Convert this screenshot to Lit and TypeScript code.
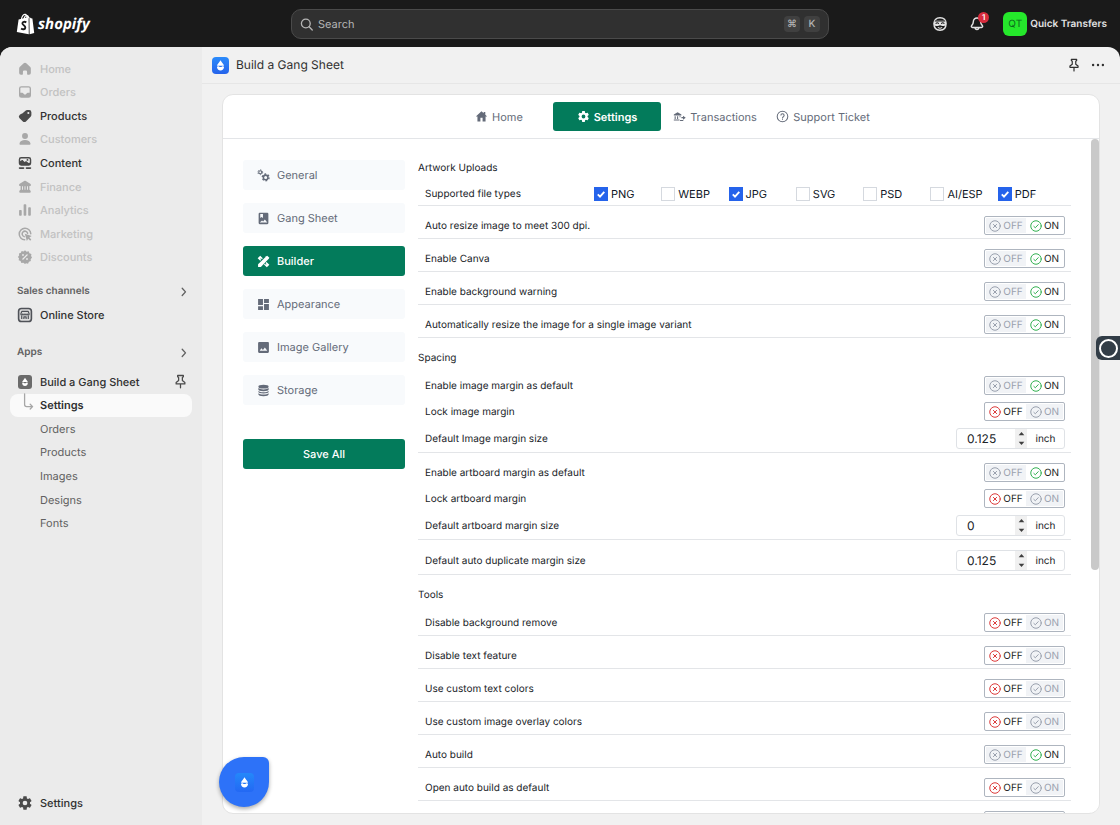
import { LitElement, html, css, svg, nothing } from "lit";
import { customElement, property, state } from "lit/decorators.js";
import { classMap } from "lit/directives/class-map.js";

const COG =
  "M12,15.5A3.5,3.5 0 0,1 8.5,12A3.5,3.5 0 0,1 12,8.5A3.5,3.5 0 0,1 15.5,12A3.5,3.5 0 0,1 12,15.5M19.43,12.97C19.47,12.65 19.5,12.33 19.5,12C19.5,11.67 19.47,11.34 19.43,11L21.54,9.37C21.73,9.22 21.78,8.95 21.66,8.73L19.66,5.27C19.54,5.05 19.27,4.96 19.05,5.05L16.56,6.05C16.04,5.66 15.5,5.32 14.87,5.07L14.5,2.42C14.46,2.18 14.25,2 14,2H10C9.75,2 9.54,2.18 9.5,2.42L9.13,5.07C8.5,5.32 7.96,5.66 7.44,6.05L4.95,5.05C4.73,4.96 4.46,5.05 4.34,5.27L2.34,8.73C2.21,8.95 2.27,9.22 2.46,9.37L4.57,11C4.53,11.34 4.5,11.67 4.5,12C4.5,12.33 4.53,12.65 4.57,12.97L2.46,14.63C2.27,14.78 2.21,15.05 2.34,15.27L4.34,18.73C4.46,18.95 4.73,19.03 4.95,18.95L7.44,17.94C7.96,18.34 8.5,18.68 9.13,18.93L9.5,21.58C9.54,21.82 9.75,22 10,22H14C14.25,22 14.46,21.82 14.5,21.58L14.87,18.93C15.5,18.67 16.04,18.34 16.56,17.94L19.05,18.95C19.27,19.03 19.54,18.95 19.66,18.73L21.66,15.27C21.78,15.05 21.73,14.78 21.54,14.63L19.43,12.97Z";

const DROP = svg`
  <path d="M12 3.5C13.2 6 17 9.6 17.6 12.2H6.4C7 9.6 10.8 6 12 3.5Z"/>
  <path d="M6.3 14c1.3-1.1 2.4-1.1 3.6-.2 1.3 1 2.900 1 4.200 0 1.200-.9 2.400-.9 3.600.2-.1 3.600-2.500 6-5.700 6s-5.600-2.400-5.700-6z"/>`;

/* Solid glyphs are filled with currentColor; outlined ones set their own stroke. */
const ICONS: Record<string, { box: number; body: unknown }> = {
  navHome: { box: 20, body: svg`<path d="M8.4 2.9a2.300 2.300 0 0 1 3.200 0l4.700 4.400c.6.6 1 1.400 1 2.200V15a2.200 2.200 0 0 1-2.200 2.200h-1.600a.9.9 0 0 1-.9-.9v-3a1.400 1.400 0 0 0-1.400-1.400H8.800a1.400 1.400 0 0 0-1.400 1.400v3a.9.9 0 0 1-.9.9H4.900A2.200 2.200 0 0 1 2.700 15V9.500c0-.8.4-1.600 1-2.200z"/>` },
  navOrders: { box: 20, body: svg`<path fill-rule="evenodd" d="M5.500 2.700h9a3 3 0 0 1 3 3v8.600a3 3 0 0 1-3 3h-9a3 3 0 0 1-3-3V5.700a3 3 0 0 1 3-3zm0 1.700c-.8 0-1.300.5-1.300 1.300v5.100h2.300c.7 0 1.300.4 1.600 1l.3.6c.2.4.5.6.9.6h1.400c.4 0 .7-.2.9-.6l.3-.6c.3-.6.900-1 1.600-1h2.300V5.700c0-.8-.5-1.300-1.300-1.300z"/>` },
  navProducts: { box: 20, body: svg`<path fill-rule="evenodd" d="M10.600 3.300A3 3 0 0 1 12.700 2.500h2.600a2.800 2.800 0 0 1 2.700 2.700v2.600c0 1.700-.3 2.500-1 3.200l-5.500 5.500a3.200 3.200 0 0 1-4.500 0L3.200 12.700a3 3 0 0 1 0-4.100c1-1 2.200-1.400 3.400-1.700zM14.200 7.500a1.300 1.300 0 1 0 0-2.600 1.300 1.300 0 0 0 0 2.600z"/>` },
  navCustomers: { box: 20, body: svg`<circle cx="10" cy="6.200" r="3.700"/><path d="M10 11.400c-3.600 0-6.700 1.700-6.900 4.400-.1.900.6 1.500 1.400 1.500h11c.8 0 1.500-.6 1.400-1.500-.2-2.700-3.300-4.400-6.900-4.400z"/>` },
  navContent: { box: 20, body: svg`<path fill-rule="evenodd" d="M5.200 2.500h9.600a3 3 0 0 1 3 3v4.900a3 3 0 0 1-3 3H5.200a3 3 0 0 1-3-3V5.500a3 3 0 0 1 3-3zm0 1.800c-.8 0-1.200.4-1.200 1.200v2.300l1.800-1.200c.6-.4 1.300-.3 1.800.2l1.800 1.800 1-.6c.6-.4 1.300-.3 1.800.1l1.900 1.500c1 .7 1.900.5 1.900-.4V5.500c0-.8-.4-1.200-1.200-1.200zM13.100 7.300a1.200 1.200 0 1 0 0-2.400 1.200 1.200 0 0 0 0 2.400z"/><rect x="2.200" y="15.200" width="7" height="2.200" rx="1"/><rect x="10.800" y="15.200" width="7" height="2.200" rx="1"/>` },
  navFinance: { box: 20, body: svg`<path fill-rule="evenodd" d="M9 2.600c.6-.4 1.400-.4 2 0l5.600 3.200c1.500.9.900 3-.8 3h-.3v4.700c.9.300 1.700 1.100 1.700 2.300 0 .9-.7 1.500-1.500 1.500H4.300c-.8 0-1.500-.6-1.500-1.500 0-1.200.8-2 1.700-2.300V8.800h-.3c-1.700 0-2.300-2.100-.8-3zM6.300 9v4.300h1.200V9zm3.100 0v4.300h1.200V9zm3.100 0v4.300h1.200V9z"/>` },
  navAnalytics: { box: 20, body: svg`<rect x="2.600" y="10" width="3.300" height="7.200" rx="1"/><rect x="8.300" y="2.800" width="3.300" height="14.400" rx="1"/><rect x="14" y="6.500" width="3.300" height="10.700" rx="1"/>` },
  navMarketing: { box: 20, body: svg`<g fill="none" stroke="currentColor" stroke-width="1.900" stroke-linecap="round"><path d="M17.200 9.600A7.200 7.200 0 1 0 9.600 17.200"/><path d="M13.300 9A3.500 3.500 0 1 0 9 13.300"/></g><path d="M9.800 9.800l8.600 2.800-3 1.800 2.500 2.600-1.400 1.400-2.500-2.500-1.700 2.700z"/>` },
  navDiscounts: { box: 20, body: svg`<path fill-rule="evenodd" d="M10 1.600l2 1.700 2.600-.4.900 2.500 2.500.9-.4 2.600 1.200 1.800-1.700 2 .2 2.400-2.400.8-1.100 2.400-2.500-.5L10 18.800l-2-1.500-2.600.1-.9-2.400-2.400-.9.4-2.500L1.100 10l1.600-2-.3-2.500 2.500-.9L5.800 2.500l2.400.6zM7.500 8.600a1.100 1.100 0 1 0 0-2.200 1.100 1.100 0 0 0 0 2.200zm5 5a1.100 1.100 0 1 0 0-2.200 1.100 1.100 0 0 0 0 2.200zM12.600 6.400L6.400 12.600l1 1 6.200-6.200z"/>` },
  store: { box: 20, body: svg`<rect x="2" y="1.800" width="16" height="16.400" rx="3.600" fill="#dcdcdc" stroke="#4f5258" stroke-width="2"/><g fill="none" stroke="#4f5258" stroke-width="1.500" stroke-linejoin="round"><path d="M6 5.500h8l1.200 3.200c0 1.600-2.400 1.600-2.600 0-.2 1.600-2.400 1.600-2.600 0-.2 1.600-2.400 1.600-2.600 0-.2 1.600-2.600 1.600-2.600 0z"/><path d="M5.900 10.500V15M14.100 10.500V15M8.600 15v-2.600h2.800V15"/></g>` },
  pin: { box: 20, body: svg`<path fill="none" stroke="currentColor" stroke-width="1.700" stroke-linejoin="round" stroke-linecap="round" d="M6.200 2h7.600v1.600l-1.300 1V8.800l3.300 2.500v2H4.200v-2l3.300-2.500V4.600l-1.300-1zM10 13.400v5"/>` },
  chevron: { box: 20, body: svg`<path fill="none" stroke="currentColor" stroke-width="2.200" stroke-linecap="round" stroke-linejoin="round" d="M7 5.500l5.500 6L7 17.500"/>` },
  branch: { box: 20, body: svg`<path fill="none" stroke="#a6a6a6" stroke-width="1.600" stroke-linecap="round" stroke-linejoin="round" d="M9.500-4v13.500a2.500 2.500 0 0 0 2.500 2.500H19.500M16.500 9L19.500 12 16.500 15"/>` },
  search: { box: 20, body: svg`<g fill="none" stroke="currentColor" stroke-width="1.900" stroke-linecap="round"><circle cx="8.300" cy="9.300" r="6.300"/><path d="M13 14l4.500 4.500"/></g>` },
  sidekick: { box: 20, body: svg`<path fill="none" stroke="currentColor" stroke-width="1.800" d="M10 2.300c5.200 0 7.500 2.700 7.500 7.700s-2.300 7.700-7.500 7.700S2.500 15 2.500 10 4.800 2.300 10 2.300z"/><path d="M2.800 5.600h14.400l.8 4c-.7 1.600-2.200 3-4 3-1.700 0-2.700-1-4-1s-2.300 1-4 1c-1.800 0-3.300-1.400-4-3z"/><path fill="none" stroke="#1a1a1a" stroke-width="1.300" stroke-linecap="round" d="M5 9.300c.9-.9 2.200-.9 3.100 0M11.900 9.300c.9-.9 2.200-.9 3.100 0M4 6.300h12"/><path fill="none" stroke="currentColor" stroke-width="1.300" stroke-linecap="round" d="M7.800 14.500c1.400.9 3 .9 4.400 0"/>` },
  bell: { box: 20, body: svg`<path fill="none" stroke="currentColor" stroke-width="1.800" stroke-linejoin="round" stroke-linecap="round" d="M10 2.500a4.600 4.600 0 0 0-4.600 4.600c0 2.500-.8 3.600-2 4.900-.9 1-.4 2.300.9 2.300h11.400c1.300 0 1.800-1.300.9-2.300-1.200-1.300-2-2.400-2-4.900A4.600 4.600 0 0 0 10 2.500zM7.600 14.500a2.400 2.400 0 0 0 4.800 0"/>` },
  dots: { box: 20, body: svg`<circle cx="3" cy="10" r="1.700"/><circle cx="10" cy="10" r="1.700"/><circle cx="17" cy="10" r="1.700"/>` },
  home: { box: 24, body: svg`<path d="M10,21V14.500H14V21H19.500V12H22.500L19 8.800V3.500H16V6.100L12,2.500L1.500,12H4.500V21H10Z"/>` },
  cog: { box: 24, body: svg`<path d="${COG}"/>` },
  transactions: { box: 24, body: svg`<path d="M1.500 8.500L8.500 4l7 4.500v1.700h-14z"/><path d="M3 11.500h2v5H3zM7.500 11.500h2v5h-2zM12 11.500h2v2h-2zM1.500 17.500H12v2H1.500z"/><path d="M15.500 13h3v-2.500l5 3.700-5 3.700v-2.500h-3zM13 18.500h6v1.800h-6z"/>` },
  help: { box: 24, body: svg`<circle cx="12" cy="12" r="9.800" fill="none" stroke="currentColor" stroke-width="1.900"/><path d="M11,18H13V16H11V18M12,6A4,4 0 0,0 8,10H10A2,2 0 0,1 12,8A2,2 0 0,1 14,10C14,12 11,11.750 11,15H13C13,12.750 16,12.500 16,10A4,4 0 0,0 12,6Z"/>` },
  gears: { box: 24, body: svg`<g fill="none" stroke="currentColor"><circle cx="6" cy="6" r="2.800" stroke-width="2"/><circle cx="6" cy="6" r="4.400" stroke-width="1.800" stroke-dasharray="2.300 2.300"/><circle cx="16" cy="15.500" r="4.200" stroke-width="2.800"/><circle cx="16" cy="15.500" r="6.200" stroke-width="2.600" stroke-dasharray="3.250 3.250"/></g>` },
  album: { box: 24, body: svg`<path fill-rule="evenodd" d="M5 1.500h14a2 2 0 0 1 2 2v17a2 2 0 0 1-2 2H5a2 2 0 0 1-2-2v-17a2 2 0 0 1 2-2zm1 2v7.500l2.500-1.700L11 11V3.500zm-1 16h14l-4.500-5.500-3.200 3.600-2-2z"/>` },
  tools: { box: 24, body: svg`<path d="M17.200 2.300l1.700-1.100 3.900 3.900-1.100 1.800L7.100 22H2v-5z"/><path d="M1.200 6l4.700-4.700 4.800 4.800-1.800 1.800-1.700-1.700-1 1 1.700 1.700-1.900 1.900zM17.500 12.800l5.300 5.300-4.700 4.700-5.200-5.200 1.700-1.700 1.900 1.900 1-1-1.900-1.900z"/>` },
  dashboard: { box: 24, body: svg`<path d="M13,2V9H22V2M13,22H22V11H13M2,22H11V15H2M2,13H11V2H2V13Z"/>` },
  image: { box: 24, body: svg`<path d="M8,13.500L11,16.500L14.500,12L19,18H5M22,20V4C22,2.900 21.100,2 20,2H4A2,2 0 0,0 2,4V20A2,2 0 0,0 4,22H20A2,2 0 0,0 22,20Z" fill-rule="evenodd"/>` },
  storage: { box: 24, body: svg`<ellipse cx="12" cy="5" rx="9.500" ry="3.500"/><path d="M2.500 7.500c1.600 1.700 5.500 2.500 9.500 2.500s7.900-.8 9.500-2.500v2.500c0 1.700-3.700 3.200-9.500 3.200s-9.500-1.500-9.500-3.200zM2.500 12.700c1.600 1.500 5.500 2.300 9.500 2.300s7.900-.8 9.500-2.300v1.600c0 1.700-3.700 3.200-9.500 3.200s-9.500-1.500-9.500-3.200zM2.500 17c1.600 1.500 5.500 2.300 9.500 2.300s7.900-.8 9.500-2.300v1.800c0 2-3.700 3.700-9.500 3.700s-9.500-1.700-9.500-3.700z"/>` },
  off: { box: 24, body: svg`<g fill="none" stroke="currentColor" stroke-width="2" stroke-linecap="round"><circle cx="12" cy="12" r="10.500"/><path d="M8.700 8.700l6.600 6.600M15.300 8.700l-6.600 6.600"/></g>` },
  on: { box: 24, body: svg`<g fill="none" stroke="currentColor" stroke-width="2" stroke-linecap="round" stroke-linejoin="round"><circle cx="12" cy="12" r="10.500"/><path d="M7.700 12.800l2.900 2.700 5.900-6.200"/></g>` },
  up: { box: 10, body: svg`<path d="M1 7.500L5 3l4 4.500z"/>` },
  down: { box: 10, body: svg`<path d="M1 2.500L5 7l4-4.500z"/>` },
  drop: { box: 24, body: DROP },
};

const icon = (name: string, size = 16) => {
  const glyph = ICONS[name];
  return html`<svg width=${size} height=${size} viewBox="0 0 ${glyph.box} ${glyph.box}" fill="currentColor" aria-hidden="true">${glyph.body}</svg>`;
};

const base = css`
  * { box-sizing: border-box; }
  svg { display: block; flex: none; overflow: visible; }
  a { color: inherit; text-decoration: none; }
  button, input { font: inherit; color: inherit; text-rendering: inherit; }
  button { margin: 0; padding: 0; border: 0; background: none; cursor: pointer; }
`;

@customElement("on-off-toggle")
export class OnOffToggle extends LitElement {
  @property({ type: Boolean }) on = false;
  @property({ type: Boolean }) bare = false;
  @property() name = "";

  static styles = [
    base,
    css`
      :host { display: block; }
      .toggle { display: flex; padding: 1px; border: 1px solid #aeb5bf; border-radius: 2px; background: #fff; height: 19px; }
      .half { display: flex; align-items: center; justify-content: center; gap: 2px; height: 15px; color: #9aa1ae; background: #f1f3f6; }
      .left { width: 40px; }
      .right { width: 37px; }
      .active { color: #1c1f24; background: #fff; }
      .left.active svg { color: #dc3b3b; }
      .right.active svg { color: #34b153; }
    `,
  ];

  render() {
    return html`
      <button class="toggle" role="switch" aria-label=${this.name || nothing} aria-checked=${this.on ? "true" : "false"} @click=${() => (this.on = !this.on)}>
        <span class=${classMap({ half: true, left: true, active: !this.on })}>${this.bare ? nothing : html`${icon("off", 12)}OFF`}</span>
        <span class=${classMap({ half: true, right: true, active: this.on })}>${this.bare ? nothing : html`${icon("on", 12)}ON`}</span>
      </button>`;
  }
}

@customElement("inch-field")
export class InchField extends LitElement {
  @property() value = "0";
  @property() name = "";

  static styles = [
    base,
    css`
      :host { display: block; }
      .field { display: flex; align-items: stretch; width: 109px; height: 21px; border: 1px solid #dfe2e6; border-radius: 3px; background: #fff; }
      .value { flex: 1; min-width: 0; padding: 0 0 0 10px; border: 0; outline: 0; background: none; font-size: 12px; }
      .spin { display: flex; flex-direction: column; justify-content: space-between; align-items: center; width: 12px; padding: 1px 0; background: #f0f0f0; color: #3f3f3f; }
      .unit { display: flex; align-items: center; justify-content: center; width: 37px; }
    `,
  ];

  private step(by: number) {
    this.value = String(Math.max(0, Number(this.value) + by));
  }

  render() {
    return html`
      <div class="field">
        <input class="value" inputmode="decimal" aria-label=${this.name} .value=${this.value} />
        <span class="spin">
          <button aria-label="+" @click=${() => this.step(0.125)}>${icon("up", 7)}</button>
          <button aria-label="-" @click=${() => this.step(-0.125)}>${icon("down", 7)}</button>
        </span>
        <span class="unit">inch</span>
      </div>`;
  }
}

type Row = { label: string; on?: boolean; size?: string };
const FILE_TYPES: [string, boolean][] = [
  ["PNG", true], ["WEBP", false], ["JPG", true], ["SVG", false], ["PSD", false], ["AI/ESP", false], ["PDF", true],
];
const UPLOADS: Row[][] = [
  [{ label: "Auto resize image to meet 300 dpi.", on: true }],
  [{ label: "Enable Canva", on: true }],
  [{ label: "Enable background warning", on: true }],
  [{ label: "Automatically resize the image for a single image variant", on: true }],
];
const SPACING: Row[][] = [
  [
    { label: "Enable image margin as default", on: true },
    { label: "Lock image margin", on: false },
    { label: "Default Image margin size", size: "0.125" },
  ],
  [
    { label: "Enable artboard margin as default", on: true },
    { label: "Lock artboard margin", on: false },
    { label: "Default artboard margin size", size: "0" },
  ],
  [{ label: "Default auto duplicate margin size", size: "0.125" }],
];
const TOOLS: Row[][] = [
  [{ label: "Disable background remove", on: false }],
  [{ label: "Disable text feature", on: false }],
  [{ label: "Use custom text colors", on: false }],
  [{ label: "Use custom image overlay colors", on: false }],
  [{ label: "Auto build", on: true }],
  [{ label: "Open auto build as default", on: false }],
  [{ label: "", on: false }],
];

@customElement("builder-settings")
export class BuilderSettings extends LitElement {
  static styles = [
    base,
    css`
      :host { display: block; font-size: 10px; color: #202328; }
      .heading { margin: 12px 0 0; font-size: 10px; line-height: 16px; font-weight: 400; }
      .types { display: flex; align-items: center; margin-top: 6px; padding: 0 6px 0 7px; height: 24px; border-bottom: 1px solid #e3e5e8; }
      .types-label { width: 169px; }
      .types-list { flex: 1; display: grid; grid-template-columns: repeat(7, 1fr); font-size: 11px; }
      .type { display: flex; align-items: center; gap: 3px; color: #111827; white-space: nowrap; }
      .check { appearance: none; margin: 0; width: 14px; height: 14px; flex: none; border: 1px solid #d5d9df; background: #fff; }
      .check:checked { border-color: #2563eb; background: #2563eb url("data:image/svg+xml,%3Csvg xmlns='http://www.w3.org/2000/svg' viewBox='0 0 14 14'%3E%3Cpath d='M3.800 7.400l2.200 2.200 4.300-4.700' fill='none' stroke='white' stroke-width='1.900'/%3E%3C/svg%3E") center / 14px 14px; }
      .group { display: flex; flex-direction: column; gap: 7px; padding: 10px 6px 3px 7px; border-bottom: 1px solid #e3e5e8; }
      .row { display: flex; align-items: center; justify-content: space-between; }
    `,
  ];

  private groups(list: Row[][]) {
    return list.map(
      (group) => html`
        <div class="group">
          ${group.map(
            (row) => html`
              <div class="row">
                <span>${row.label}</span>
                ${row.size !== undefined
                  ? html`<inch-field .value=${row.size} .name=${row.label}></inch-field>`
                  : html`<on-off-toggle .on=${!!row.on} .bare=${!row.label} .name=${row.label}></on-off-toggle>`}
              </div>`,
          )}
        </div>`,
    );
  }

  render() {
    return html`
      <h2 class="heading">Artwork Uploads</h2>
      <div class="types">
        <span class="types-label">Supported file types</span>
        <div class="types-list">
          ${FILE_TYPES.map(([name, on]) => html`<label class="type"><input class="check" type="checkbox" .checked=${on} />${name}</label>`)}
        </div>
      </div>
      ${this.groups(UPLOADS)}
      <h2 class="heading">Spacing</h2>
      ${this.groups(SPACING)}
      <h2 class="heading">Tools</h2>
      ${this.groups(TOOLS)}`;
  }
}

@customElement("admin-sidebar")
export class AdminSidebar extends LitElement {
  static styles = [
    base,
    css`
      :host { display: flex; flex-direction: column; background: #ebebeb; padding: 10px 10px 11px; font-weight: 500; color: #303030; }
      .list { display: grid; grid-auto-rows: 1fr; }
      .main { min-height: 212px; }
      .apps { min-height: 165px; margin-top: 6px; }
      .item { display: flex; align-items: center; gap: 7px; padding: 0 4px 0 7px; }
      .item svg { color: #4a4a4a; }
      .off { color: #c2c2c2; }
      .off svg { color: #a8a8a8; }
      .sub { padding-left: 30px; font-weight: 400; color: #616161; }
      .here { padding-left: 7px; background: #fafafa; border-radius: 8px; font-weight: 600; }
      .name { flex: 1; }
      .title { display: flex; justify-content: space-between; align-items: center; margin-top: 10px; padding: 0 2px 0 7px; height: 24px; font-size: 10px; font-weight: 600; color: #616161; }
      .title.late { margin-top: 14px; }
      .tall { height: 23px; }
      .logo { display: grid; place-items: center; width: 14px; height: 14px; margin: 0 1px; border-radius: 3px; background: #6b6b6b; }
      .item .logo svg { color: #fff; }
      .foot { margin-top: auto; }
    `,
  ];

  render() {
    const main: [string, string, boolean][] = [
      ["Home", "navHome", false], ["Orders", "navOrders", false], ["Products", "navProducts", true],
      ["Customers", "navCustomers", false], ["Content", "navContent", true], ["Finance", "navFinance", false],
      ["Analytics", "navAnalytics", false], ["Marketing", "navMarketing", false], ["Discounts", "navDiscounts", false],
    ];
    return html`
      <nav class="list main">
        ${main.map(([label, glyph, on]) => html`<a class=${classMap({ item: true, off: !on })} href="#">${icon(glyph)}${label}</a>`)}
      </nav>
      <a class="title" href="#">Sales channels ${icon("chevron", 12)}</a>
      <a class="item tall" href="#">${icon("store")}Online Store</a>
      <a class="title late" href="#">Apps ${icon("chevron", 12)}</a>
      <nav class="list apps">
        <a class="item" href="#"><span class="logo">${icon("drop", 12)}</span><span class="name">Build a Gang Sheet</span>${icon("pin", 15)}</a>
        <a class="item here" href="#">${icon("branch")}Settings</a>
        ${["Orders", "Products", "Images", "Designs", "Fonts"].map((label) => html`<a class="item sub" href="#">${label}</a>`)}
      </nav>
      <a class="item tall foot" href="#">${icon("cog", 16)}Settings</a>`;
  }
}

@customElement("app-root")
export class AppRoot extends LitElement {
  @state() private section = "Builder";
  @state() private tab = "Settings";

  static styles = [
    base,
    css`
      :host { display: flex; flex-direction: column; height: 100vh; position: relative; overflow: hidden; background: #1a1a1a; color: #303030; font: 400 11px/16px Inter, "Liberation Sans", sans-serif; text-rendering: geometricPrecision; }
      .top { display: grid; grid-template-columns: 1fr minmax(0, 538px) 1fr; align-items: center; height: 47px; padding: 0 13px; color: #e3e3e3; flex: none; }
      .brand { display: flex; align-items: center; gap: 3px; padding-left: 3px; color: #fff; font: italic 700 15px/20px "Open Sans", "Noto Sans", sans-serif; }
      .search { display: flex; align-items: center; gap: 4px; height: 30px; padding: 0 8px; border: 1px solid #4a4a4a; border-radius: 10px; background: #303030; color: #b5b5b5; }
      .query { flex: 1; min-width: 0; border: 0; outline: 0; background: none; font-size: 11px; padding: 0; }
      .query::placeholder { color: #b5b5b5; opacity: 1; }
      .key { display: grid; place-items: center; width: 16px; height: 16px; border-radius: 4px; background: #404040; font: 500 10px/16px Inter, "DejaVu Sans", sans-serif; }
      .account { display: flex; justify-content: flex-end; align-items: center; }
      .bell { position: relative; margin: 0 18px 0 21px; }
      .badge { position: absolute; top: -4px; right: -4px; width: 11px; height: 11px; border-radius: 6px; background: #d72c3d; color: #fff; font-size: 8px; line-height: 11px; font-weight: 600; text-align: center; }
      .user { display: flex; align-items: center; gap: 3px; font-size: 10px; font-weight: 600; }
      .avatar { display: grid; place-items: center; width: 24px; height: 24px; border-radius: 6px; background: #25e82b; color: #0b6a1c; font-weight: 400; }
      .frame { flex: 1; min-height: 0; display: grid; grid-template-columns: 202px minmax(0, 1fr); border-radius: 12px 12px 0 0; overflow: hidden; background: #f1f1f1; }
      .page { display: flex; flex-direction: column; min-height: 0; min-width: 0; }
      .bar { display: flex; align-items: center; height: 37px; flex: none; padding: 0 15px 0 10px; border-bottom: 1px solid #e6e6e6; }
      .app { display: grid; place-items: center; width: 17px; height: 17px; margin-right: 7px; border-radius: 4px; background: linear-gradient(#2b8bfb, #2563eb); color: #fff; }
      .app-name { flex: 1; margin: 0; font-size: 12px; font-weight: 400; }
      .bar button + button { margin-left: 10px; }
      .card { flex: 1; min-height: 0; display: flex; flex-direction: column; margin: 10px 20px 11px 20px; border: 1px solid #e3e3e3; border-radius: 11px; background: #fff; overflow: hidden; }
      .tabs { display: flex; justify-content: center; flex: none; padding: 7px 0; height: 44px; border-bottom: 1px solid #e3e5e8; }
      .tab, .side-link { display: flex; align-items: center; border-radius: 3px; color: #646b79; }
      .tab { justify-content: center; gap: 4px; width: 108px; white-space: nowrap; }
      .green { background: #037b5b; color: #fff; font-weight: 500; }
      .tab.green { background: #037b5b; color: #fff; font-weight: 600; }
      .content { flex: 1; min-height: 0; display: flex; }
      .columns { flex: 1; min-width: 0; display: flex; gap: 13px; padding: 9px 20px 0; overflow: hidden; }
      .side { display: flex; flex-direction: column; gap: 13px; width: 162px; flex: none; padding-top: 12px; }
      .side-link { gap: 7px; height: 30px; padding: 0 14px; background: #f8fafc; }
      .side-link.green { background: #037b5b; color: #fff; }
      .save { height: 30px; margin-top: 21px; border-radius: 3px; }
      .settings { flex: 1; min-width: 0; }
      .track { width: 8px; flex: none; background: #fff; }
      .thumb { height: 64%; border-radius: 4px; background: #c9c9c9; }
      .widget { position: absolute; right: 0; top: 336px; display: grid; place-items: center; width: 24px; height: 24px; border-radius: 6px 0 0 6px; background: #323d47; }
      .ring { width: 19px; height: 19px; border: 2px solid #fff; border-radius: 10px; }
      .chat { position: absolute; left: 219px; bottom: 18px; display: grid; place-items: center; width: 50px; height: 50px; border-radius: 25px 6px 25px 25px; background: #2d72f8; box-shadow: 0 2px 4px #0005; }
      .chat-logo { display: grid; place-items: center; width: 19px; height: 19px; border-radius: 4px; background: linear-gradient(#2488fa, #2368f4); color: #fff; }
    `,
  ];

  render() {
    const tabs = [["Home", "home"], ["Settings", "cog"], ["Transactions", "transactions"], ["Support Ticket", "help"]];
    const sections = [
      ["General", "gears"], ["Gang Sheet", "album"], ["Builder", "tools"],
      ["Appearance", "dashboard"], ["Image Gallery", "image"], ["Storage", "storage"],
    ];
    return html`
      <header class="top">
        <a class="brand" href="#">
          <svg width="19" height="22" viewBox="0 0 19 22" aria-hidden="true">
            <path fill="none" stroke="#fff" stroke-width="1.200" d="M5.400 6.500C5.900 3 7.900 1 9.400 1.400c1.400.4 1.700 2.400 1.700 4.400M8 6C8.500 3.400 10 2.200 11.300 2.600c.9.300 1.300 1.500 1.400 2.600"/>
            <path fill="#fff" d="M2.600 6.600l10-2.700.2 17.300L.8 19z"/>
            <path fill="#fff" d="M13.400 4l1.600 1.300 1.400.2L18.200 20l-4.600 1.200z"/>
            <path fill="none" stroke="#1a1a1a" stroke-width="1.900" d="M10.300 9.300c-1.600-.9-3.800-.6-3.900 1.100-.1 1.800 3 2 2.900 4.200-.1 1.900-2.400 2.200-4.200.9"/>
          </svg>
          <span>shopify</span>
        </a>
        <label class="search">
          ${icon("search", 14)}
          <input class="query" placeholder="Search" aria-label="Search" />
          <kbd class="key">⌘</kbd><kbd class="key">K</kbd>
        </label>
        <div class="account">
          <button>${icon("sidekick")}</button>
          <button class="bell">${icon("bell")}<span class="badge">1</span></button>
          <button class="user"><span class="avatar">QT</span>Quick Transfers</button>
        </div>
      </header>
      <div class="frame">
        <admin-sidebar></admin-sidebar>
        <main class="page">
          <div class="bar">
            <span class="app">${icon("drop", 15)}</span>
            <h1 class="app-name">Build a Gang Sheet</h1>
            <button>${icon("pin", 14)}</button>
            <button>${icon("dots", 14)}</button>
          </div>
          <section class="card">
            <nav class="tabs">
              ${tabs.map(([label, glyph]) => html`
                <button class=${classMap({ tab: true, green: this.tab === label })} @click=${() => (this.tab = label)}>${icon(glyph, 13)}${label}</button>`)}
            </nav>
            <div class="content">
              <div class="columns">
                <nav class="side">
                  ${sections.map(([label, glyph]) => html`
                    <button class=${classMap({ "side-link": true, green: this.section === label })} @click=${() => (this.section = label)}>${icon(glyph, 13)}${label}</button>`)}
                  <button class="save green">Save All</button>
                </nav>
                <builder-settings class="settings"></builder-settings>
              </div>
              <div class="track"><div class="thumb"></div></div>
            </div>
          </section>
        </main>
      </div>
      <button class="widget"><span class="ring"></span></button>
      <button class="chat"><span class="chat-logo">${icon("drop", 15)}</span></button>`;
  }
}
